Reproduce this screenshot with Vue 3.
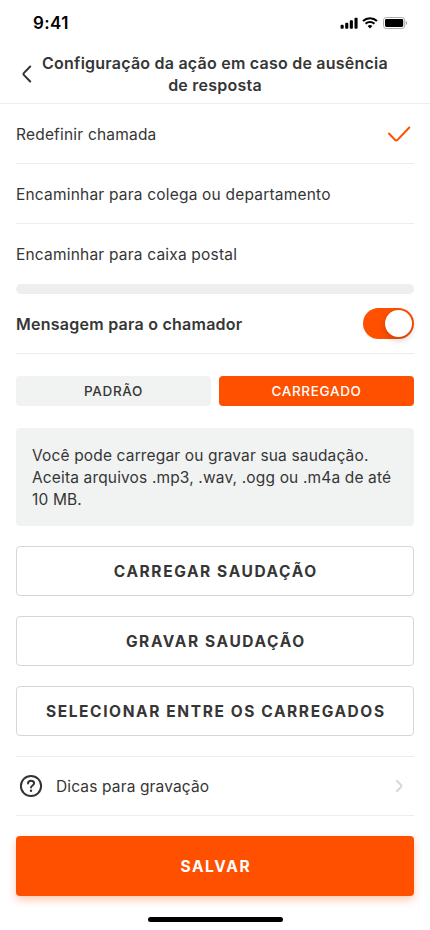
<script setup>
import { ref } from 'vue'

const options = ['Redefinir chamada', 'Encaminhar para colega ou departamento', 'Encaminhar para caixa postal']
const selected = ref(0)
const messageOn = ref(true)
const tabs = ['PADRÃO', 'CARREGADO']
const activeTab = ref(1)
const actions = ['CARREGAR SAUDAÇÃO', 'GRAVAR SAUDAÇÃO', 'SELECIONAR ENTRE OS CARREGADOS']
</script>

<template>
  <main class="screen">
    <div class="status">
      <span class="time">9:41</span>
      <div class="status-icons">
        <svg class="signal" width="18" height="12" viewBox="0 0 18 12">
          <rect x="0.6" y="7.8" width="3.1" height="3.9" rx="0.9" />
          <rect x="5.2" y="5.8" width="3.1" height="5.9" rx="0.9" />
          <rect x="9.8" y="3.3" width="3.1" height="8.4" rx="0.9" />
          <rect x="14.5" y="0.8" width="3.1" height="10.9" rx="0.9" />
        </svg>
        <svg class="wifi" width="16" height="12" viewBox="0 0 16 12">
          <path d="M1 4.1a10.1 10.1 0 0 1 14 0" />
          <path d="M3.6 6.8a6.4 6.4 0 0 1 8.8 0" />
          <path class="dot" d="M5.6 9.100a3.500 3.500 0 0 1 4.800 0L8 11.500Z" />
        </svg>
        <svg class="battery" width="25" height="12" viewBox="0 0 25 12">
          <rect class="shell" x="0.5" y="0.5" width="21.200" height="11" rx="2.800" />
          <rect x="2" y="2" width="18.200" height="8" rx="1.400" />
          <path class="cap" d="M22.800 4v4c.8-.3 1.300-1.100 1.300-2s-.5-1.700-1.300-2Z" />
        </svg>
      </div>
    </div>

    <header class="header">
      <button class="back" aria-label="Voltar">
        <svg width="10" height="18" viewBox="0 0 10 18"><path d="M8.200 1.500 2 7.900Q1 9 2 10.100L8.200 16.500" /></svg>
      </button>
      <h1>Configuração da ação em caso de ausência<br />de resposta</h1>
    </header>

    <section class="content">
      <ul class="options">
        <li v-for="(option, i) in options" :key="option" @click="selected = i">
          <span>{{ option }}</span>
          <svg v-if="selected === i" class="check" width="24" height="18" viewBox="0 0 24 18">
            <path d="M2 7.500 8.300 14.100Q9.300 15 10.300 14.100L22.300 1.500" />
          </svg>
        </li>
      </ul>

      <div class="separator"></div>

      <div class="message-row">
        <span class="message-label">Mensagem para o chamador</span>
        <button class="toggle" :class="{ on: messageOn }" aria-label="Mensagem" @click="messageOn = !messageOn">
          <span class="knob"></span>
        </button>
      </div>

      <div class="tabs">
        <button v-for="(tab, i) in tabs" :key="tab" class="tab" :class="{ active: activeTab === i }" @click="activeTab = i">{{ tab }}</button>
      </div>

      <p class="info">Você pode carregar ou gravar sua saudação.<br />Aceita arquivos .mp3, .wav, .ogg ou .m4a de até<br />10 MB.</p>

      <div class="actions">
        <button v-for="action in actions" :key="action" class="action">{{ action }}</button>
      </div>

      <div class="tips">
        <svg class="help" width="24" height="24" viewBox="0 0 24 24">
          <circle cx="12" cy="12" r="10.100" />
          <path d="M9 9.400C9.100 7.500 10.300 6.700 12 6.700s3.100 1 3.100 2.600c0 2.200-3.100 2.200-3.100 4.300" />
          <circle class="point" cx="12" cy="16.700" r="1.200" />
        </svg>
        <span>Dicas para gravação</span>
        <svg class="next" width="8" height="14" viewBox="0 0 8 14"><path d="M1.800 1.800 6.200 6.300Q6.700 7 6.200 7.700L1.800 12.200" /></svg>
      </div>

      <button class="save">SALVAR</button>
    </section>
    <div class="home-indicator"></div>
  </main>
</template>

<style>
body {
  margin: 0;
  background: #fff;
}
</style>

<style scoped>
* {
  box-sizing: border-box;
}
.screen {
  width: 430px;
  height: 930px;
  background: #fff;
  color: #363636;
  font-family: Inter, "Liberation Sans", sans-serif;
  font-size: 15.5px;
  line-height: 22px;
  letter-spacing: 0.18px;
  overflow: hidden;
}
button {
  border: 0;
  padding: 0;
  margin: 0;
  font: inherit;
  color: inherit;
  background: none;
}
svg path {
  fill: none;
  stroke-linecap: round;
  stroke-linejoin: round;
}
.status {
  height: 46px;
  padding: 0 22px 0 33px;
  display: flex;
  align-items: center;
  justify-content: space-between;
  color: #000;
}
.time {
  font-size: 17px;
  font-weight: 600;
  letter-spacing: 0.35px;
}
.status-icons {
  display: flex;
  align-items: center;
  gap: 5px;
}
.signal {
  margin-right: -1px;
}
.wifi path {
  stroke: #000;
  stroke-width: 2.1;
  stroke-linecap: butt;
}
.wifi .dot {
  fill: #000;
  stroke: none;
}
.battery .shell {
  fill: none;
  stroke: #aaa;
}
.battery .cap {
  fill: #aaa;
}
.header {
  height: 58px;
  border-bottom: 1px solid #ededed;
  padding: 6px 0 0 22px;
  display: flex;
  align-items: flex-start;
}
.back {
  width: 10px;
  height: 18px;
  margin-top: 13px;
}
.back svg {
  display: block;
}
.back path {
  stroke: #333;
  stroke-width: 2;
}
h1 {
  width: 366px;
  margin: 0;
  font-size: 16px;
  line-height: 22px;
  font-weight: 600;
  letter-spacing: 0.23px;
  text-align: center;
}
.content {
  padding: 0 16px;
}
.options {
  list-style: none;
  margin: 0;
  padding: 0;
}
.options li {
  height: 60px;
  display: flex;
  align-items: center;
  justify-content: space-between;
  border-bottom: 1px solid #ededed;
  padding: 2px 3px 0 0;
  letter-spacing: 0.2px;
}
.options li:last-child {
  border-bottom: 0;
  padding-top: 1px;
}
.check path {
  stroke: #ff5000;
  stroke-width: 2;
}
.separator {
  height: 10px;
  border-radius: 5px;
  background: #edefee;
}
.message-row {
  height: 60px;
  border-bottom: 1px solid #ededed;
  display: flex;
  align-items: center;
  justify-content: space-between;
}
.message-label {
  font-size: 16px;
  font-weight: 600;
  letter-spacing: 0.25px;
}
.toggle {
  width: 51px;
  height: 31px;
  padding: 2px;
  border-radius: 16px;
  background: #ddd;
  display: flex;
}
.toggle.on {
  background: #ff5000;
  justify-content: flex-end;
}
.knob {
  width: 27px;
  height: 27px;
  border-radius: 50%;
  background: #fff;
  box-shadow: 0 3px 7px rgba(0, 0, 0, 0.2);
}
.tabs {
  display: grid;
  grid-template-columns: 1fr 1fr;
  gap: 8px;
  margin-top: 22px;
}
.tab {
  height: 30px;
  border-radius: 4px;
  background: #f1f3f2;
  font-size: 13.5px;
  font-weight: 500;
  letter-spacing: 0.65px;
}
.tab.active {
  background: #ff5000;
  color: #fff;
}
.info {
  height: 98px;
  margin: 22px 0 20px;
  padding: 17px 16px 15px;
  border-radius: 4px;
  background: #f1f3f2;
  white-space: nowrap;
  letter-spacing: 0.15px;
}
.actions {
  display: grid;
  gap: 20px;
}
.action {
  height: 50px;
  padding-top: 2px;
  border: 1px solid #d6d6d6;
  border-radius: 4px;
  font-size: 15.5px;
  font-weight: 700;
  letter-spacing: 1.6px;
  text-indent: 1.6px;
}
.tips {
  height: 60px;
  margin-top: 20px;
  padding: 0 11px 0 3px;
  border-top: 1px solid #ededed;
  border-bottom: 1px solid #ededed;
  display: flex;
  align-items: center;
}
.tips span {
  margin-left: 13px;
  padding-top: 1px;
  letter-spacing: 0.14px;
}
.help circle,
.help path {
  fill: none;
  stroke: #333;
  stroke-width: 2;
}
.help .point {
  fill: #333;
  stroke: none;
}
.next {
  margin-left: auto;
}
.next path {
  stroke: #d8d8d8;
  stroke-width: 2.1;
}
.save {
  display: block;
  width: 100%;
  height: 60px;
  margin-top: 20px;
  padding-top: 2px;
  border-radius: 4px;
  background: #ff5000;
  color: #fff;
  font-size: 15.5px;
  font-weight: 700;
  letter-spacing: 1.6px;
  text-indent: 1.6px;
  box-shadow: 0 4px 8px rgba(255, 80, 0, 0.3);
}
.home-indicator {
  width: 135px;
  height: 5px;
  margin: 21px auto 0;
  border-radius: 3px;
  background: #000;
}
</style>
